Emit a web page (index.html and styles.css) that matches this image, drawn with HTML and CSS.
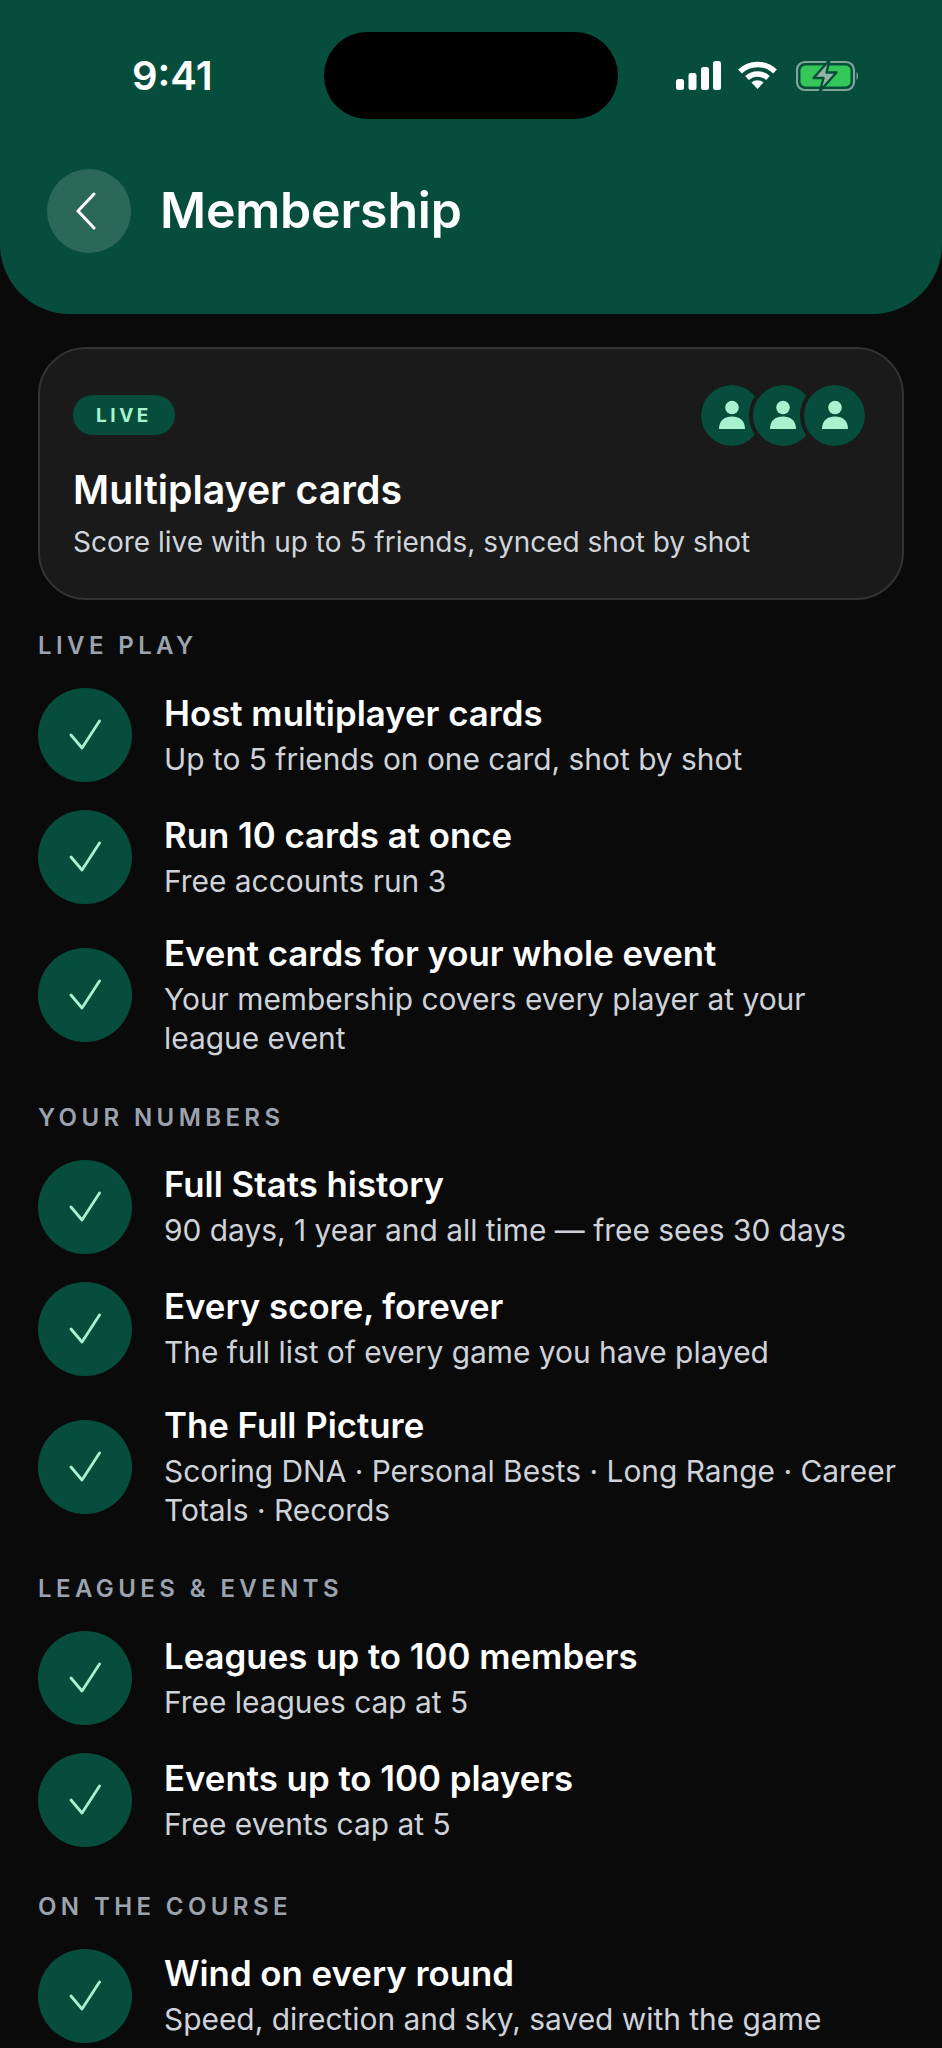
FILE: index.html
```html
<!DOCTYPE html>
<html lang="en">
  <head>
    <meta charset="UTF-8" />
    <meta name="viewport" content="width=device-width, initial-scale=1.0" />
    <title>Membership</title>
    <link rel="stylesheet" href="styles.css">
  </head>
  <body>
    <!-- Header -->
    <header class="top">
      <div class="status">
        <span class="time">9:41</span>
        <span class="island"></span>
        <div class="status-icons">
          <svg width="45" height="29" viewBox="0 0 45 29" fill="#fff">
            <rect x="0" y="18" width="8" height="11" rx="2.5" />
            <rect x="12.5" y="12" width="8" height="17" rx="2.5" />
            <rect x="25" y="6" width="8" height="23" rx="2.5" />
            <rect x="37" y="0" width="8" height="29" rx="2.5" />
          </svg>
          <svg width="39" height="29" viewBox="0 0 39 29" fill="none" stroke="#fff" stroke-width="5.5">
            <path d="M2 10.5 C 12 1, 27 1, 37 10.5" />
            <path d="M9 17 C 15 11.5, 24 11.5, 30 17" />
            <path d="M13.5 21.5 L19.5 28 L25.5 21.5 C 22 18.5, 17 18.5, 13.5 21.5 Z" fill="#fff" stroke="none" />
          </svg>
          <svg class="battery" width="63" height="33" viewBox="0 0 63 33">
            <rect x="1" y="3" width="57" height="28" rx="8" fill="none" stroke="#7fa597" stroke-width="2.2" />
            <rect x="4.5" y="6.5" width="50" height="21" rx="5" fill="#34c759" />
            <path d="M60.5 13 C 62.5 14.5, 62.5 19.5, 60.5 21 Z" fill="#7fa597" />
            <path d="M33.5 1 L17.5 19 H27.5 L24 32 L40.5 13.5 H30.5 Z" fill="#8fb3a5" stroke="#064e3b" stroke-width="2.4" stroke-linejoin="round" />
          </svg>
        </div>
      </div>
      <div class="title-bar">
        <button class="back">
          <svg width="24" height="38" viewBox="0 0 24 38" fill="none" stroke="#fff" stroke-width="3" stroke-linecap="round" stroke-linejoin="round">
            <path d="M20 2 L4 19 L20 36" />
          </svg>
        </button>
        <h1>Membership</h1>
      </div>
    </header>

    <main class="content">
      <!-- Live card -->
      <div class="live-card">
        <div class="live-top">
          <span class="pill">LIVE</span>
          <div class="avatars">
            <span class="avatar"><svg width="28" height="30" viewBox="0 0 28 30" fill="#a7f3d0"><circle cx="14" cy="7.5" r="6.8" /><path d="M1 29 C 1 20, 7 16.5, 14 16.5 C 21 16.5, 27 20, 27 29 Z" /></svg></span>
            <span class="avatar"><svg width="28" height="30" viewBox="0 0 28 30" fill="#a7f3d0"><circle cx="14" cy="7.5" r="6.8" /><path d="M1 29 C 1 20, 7 16.5, 14 16.5 C 21 16.5, 27 20, 27 29 Z" /></svg></span>
            <span class="avatar"><svg width="28" height="30" viewBox="0 0 28 30" fill="#a7f3d0"><circle cx="14" cy="7.5" r="6.8" /><path d="M1 29 C 1 20, 7 16.5, 14 16.5 C 21 16.5, 27 20, 27 29 Z" /></svg></span>
          </div>
        </div>
        <h2>Multiplayer cards</h2>
        <p>Score live with up to 5 friends, synced shot by shot</p>
      </div>

      <!-- Live play -->
      <section class="group">
        <h3>LIVE PLAY</h3>
        <div class="row">
          <span class="tick"><svg width="32" height="32" viewBox="0 0 32 32" fill="none" stroke="#a7f3d0" stroke-width="2.8" stroke-linecap="round" stroke-linejoin="round"><path d="M2 16 L13 29 L30.5 2" /></svg></span>
          <div class="row-text"><h4>Host multiplayer cards</h4><p>Up to 5 friends on one card, shot by shot</p></div>
        </div>
        <div class="row">
          <span class="tick"><svg width="32" height="32" viewBox="0 0 32 32" fill="none" stroke="#a7f3d0" stroke-width="2.8" stroke-linecap="round" stroke-linejoin="round"><path d="M2 16 L13 29 L30.5 2" /></svg></span>
          <div class="row-text"><h4>Run 10 cards at once</h4><p>Free accounts run 3</p></div>
        </div>
        <div class="row">
          <span class="tick"><svg width="32" height="32" viewBox="0 0 32 32" fill="none" stroke="#a7f3d0" stroke-width="2.8" stroke-linecap="round" stroke-linejoin="round"><path d="M2 16 L13 29 L30.5 2" /></svg></span>
          <div class="row-text"><h4>Event cards for your whole event</h4><p>Your membership covers every player at your league event</p></div>
        </div>
      </section>

      <!-- Your numbers -->
      <section class="group">
        <h3>YOUR NUMBERS</h3>
        <div class="row">
          <span class="tick"><svg width="32" height="32" viewBox="0 0 32 32" fill="none" stroke="#a7f3d0" stroke-width="2.8" stroke-linecap="round" stroke-linejoin="round"><path d="M2 16 L13 29 L30.5 2" /></svg></span>
          <div class="row-text"><h4>Full Stats history</h4><p>90 days, 1 year and all time — free sees 30 days</p></div>
        </div>
        <div class="row">
          <span class="tick"><svg width="32" height="32" viewBox="0 0 32 32" fill="none" stroke="#a7f3d0" stroke-width="2.8" stroke-linecap="round" stroke-linejoin="round"><path d="M2 16 L13 29 L30.5 2" /></svg></span>
          <div class="row-text"><h4>Every score, forever</h4><p>The full list of every game you have played</p></div>
        </div>
        <div class="row">
          <span class="tick"><svg width="32" height="32" viewBox="0 0 32 32" fill="none" stroke="#a7f3d0" stroke-width="2.8" stroke-linecap="round" stroke-linejoin="round"><path d="M2 16 L13 29 L30.5 2" /></svg></span>
          <div class="row-text"><h4>The Full Picture</h4><p>Scoring DNA · Personal Bests · Long Range · Career Totals · Records</p></div>
        </div>
      </section>

      <!-- Leagues and events -->
      <section class="group">
        <h3>LEAGUES &amp; EVENTS</h3>
        <div class="row">
          <span class="tick"><svg width="32" height="32" viewBox="0 0 32 32" fill="none" stroke="#a7f3d0" stroke-width="2.8" stroke-linecap="round" stroke-linejoin="round"><path d="M2 16 L13 29 L30.5 2" /></svg></span>
          <div class="row-text"><h4>Leagues up to 100 members</h4><p>Free leagues cap at 5</p></div>
        </div>
        <div class="row">
          <span class="tick"><svg width="32" height="32" viewBox="0 0 32 32" fill="none" stroke="#a7f3d0" stroke-width="2.8" stroke-linecap="round" stroke-linejoin="round"><path d="M2 16 L13 29 L30.5 2" /></svg></span>
          <div class="row-text"><h4>Events up to 100 players</h4><p>Free events cap at 5</p></div>
        </div>
      </section>

      <!-- On the course -->
      <section class="group">
        <h3>ON THE COURSE</h3>
        <div class="row">
          <span class="tick"><svg width="32" height="32" viewBox="0 0 32 32" fill="none" stroke="#a7f3d0" stroke-width="2.8" stroke-linecap="round" stroke-linejoin="round"><path d="M2 16 L13 29 L30.5 2" /></svg></span>
          <div class="row-text"><h4>Wind on every round</h4><p>Speed, direction and sky, saved with the game</p></div>
        </div>
      </section>
    </main>
  </body>
</html>
```

FILE: styles.css
```css
/* Base */
html,
body {
  height: 2048px;
  overflow: hidden;
}

body {
  margin: 0;
  background: #0a0a0a;
  color: #fff;
  font-family: Inter, "Noto Sans", sans-serif;
}

h1,
h2,
h3,
h4,
p {
  margin: 0;
}

/* Header */
.top {
  height: 314px;
  box-sizing: border-box;
  padding: 32px 47px 0;
  background: #064e3b;
  border-radius: 0 0 70px 70px;
}

.status {
  display: grid;
  grid-template-columns: 192px 294px 1fr;
  height: 87px;
  align-items: center;
  margin-right: 36px;
  margin-left: -47px;
  padding-left: 132px;
}

.time {
  font-size: 40px;
  font-weight: 600;
}

.island {
  height: 87px;
  background: #000;
  border-radius: 44px;
}

.status-icons {
  display: flex;
  justify-content: flex-end;
  align-items: center;
  gap: 17px;
}

.battery {
  margin-left: 2px;
}

.title-bar {
  display: flex;
  align-items: center;
  gap: 29px;
  margin-top: 50px;
}

.back {
  display: flex;
  align-items: center;
  justify-content: center;
  width: 84px;
  height: 84px;
  padding: 0 6px 0 0;
  border: none;
  border-radius: 50%;
  background: rgba(255, 255, 255, 0.15);
}

h1 {
  padding-bottom: 2px;
  font-size: 50px;
  font-weight: 600;
  letter-spacing: -0.2px;
}

/* Live card */
.content {
  padding: 33px 38px 0;
}

.live-card {
  height: 253px;
  box-sizing: border-box;
  padding: 35px 33px 0;
  background: #1a1a1a;
  border: 2px solid #333;
  border-radius: 48px;
}

.live-top {
  display: flex;
  justify-content: space-between;
  align-items: center;
  height: 62px;
}

.pill {
  display: flex;
  align-items: center;
  justify-content: center;
  width: 102px;
  height: 40px;
  background: #064e3b;
  border-radius: 20px;
  color: #a7f3d0;
  font-size: 19px;
  font-weight: 700;
  letter-spacing: 3.5px;
}

.avatars {
  display: flex;
}

.avatar {
  display: flex;
  align-items: center;
  justify-content: center;
  width: 61px;
  height: 61px;
  box-sizing: content-box;
  border: 4px solid #1a1a1a;
  border-radius: 50%;
  background: #064e3b;
  background-clip: padding-box;
  margin-left: -17.5px;
}

.avatar:first-child {
  margin-left: 0;
}

.live-card h2 {
  margin-top: 21px;
  font-size: 39.2px;
  font-weight: 600;
  line-height: 46px;
}

.live-card p {
  margin-top: 11px;
  color: #d1d5db;
  font-size: 28px;
  line-height: 36px;
}

/* Feature groups */
.group {
  margin-top: 44.5px;
}

.live-card + .group {
  margin-top: 31px;
}

.group h3 {
  color: #9ca3af;
  font-size: 24px;
  font-weight: 600;
  line-height: 29px;
  letter-spacing: 4.4px;
}

.row {
  display: flex;
  align-items: center;
  gap: 32px;
  margin-top: 28px;
}

.tick {
  display: flex;
  align-items: center;
  justify-content: center;
  flex: none;
  width: 94px;
  height: 94px;
  border-radius: 50%;
  background: #064e3b;
}

.row-text h4 {
  margin-top: -2px;
  font-size: 34.8px;
  font-weight: 580;
  line-height: 46px;
}

.row-text p {
  margin-top: 4px;
  color: #cfd3d9;
  font-size: 29.9px;
  line-height: 39px;
}
```
